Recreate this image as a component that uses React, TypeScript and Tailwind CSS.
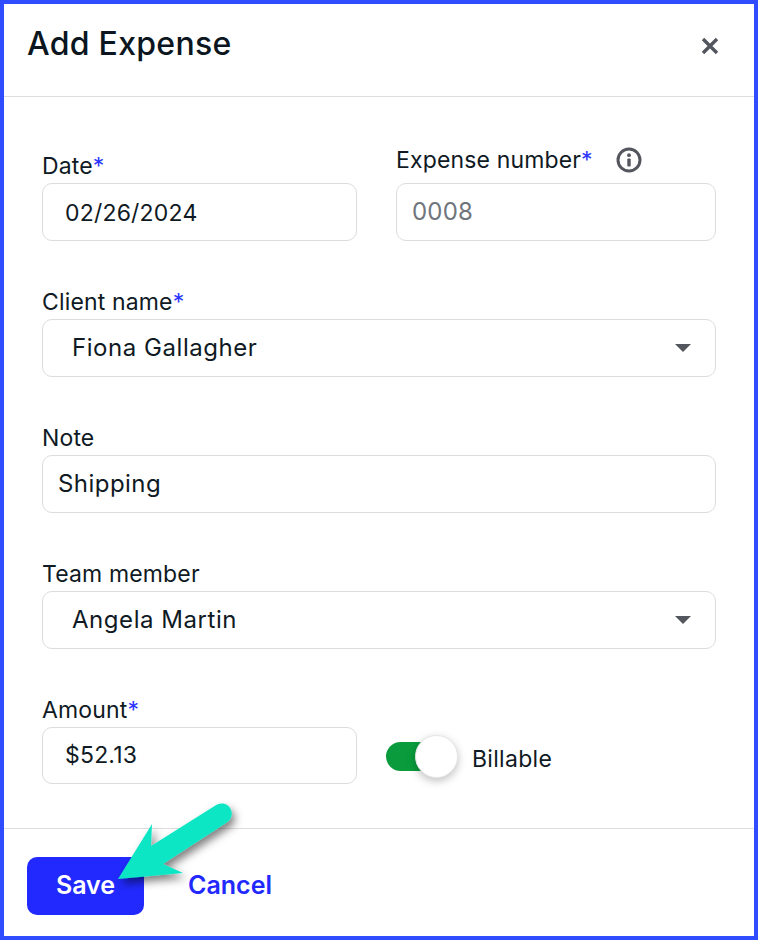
const font = { fontFamily: "Inter, sans-serif" };

function Label({ text, required }: { text: string; required?: boolean }) {
  return (
    <label className="block text-[23px] leading-[28px] tracking-[0.15px] text-[#0f1a24]">
      {text}
      {required && <span className="text-[#2b35ff]">*</span>}
    </label>
  );
}

function Select({ value }: { value: string }) {
  return (
    <div className="flex h-[58px] items-center justify-between rounded-[10px] border border-[#dcdcdc] pl-[29px] pr-[24px] text-[24px] tracking-[0.55px] text-[#0f1a24]">
      <span>{value}</span>
      <span className="h-0 w-0 border-x-[8px] border-t-[8px] border-x-transparent border-t-[#54565e]" />
    </div>
  );
}

export default function App() {
  return (
    <div
      className="relative flex h-[940px] w-[758px] flex-col overflow-hidden border-[4px] border-[#2f4dff] bg-white"
      style={font}
    >
      <header className="flex h-[93px] shrink-0 items-center justify-between border-b border-[#dedede] pb-[8px] pl-[23px] pr-[35px]">
        <h1 className="-mt-[4px] text-[32px] font-medium leading-none tracking-[0.27px] text-[#0b1620]">Add Expense</h1>
        <svg width="18" height="18" viewBox="0 0 18 18" className="text-[#54565e]">
          <path d="M2 2 L16 16 M16 2 L2 16" stroke="currentColor" strokeWidth="3.4" />
        </svg>
      </header>

      <div className="flex flex-1 flex-col px-[38px] pt-[55px]">
        <div className="flex gap-[39px]">
          <div className="w-[315px]">
            <Label text="Date" required />
            <div className="mt-[3px] flex h-[58px] items-center rounded-[10px] border border-[#dcdcdc] pl-[22px] pt-[2px] text-[23px] tracking-[0.2px] text-[#0f1a24]">
              02/26/2024
            </div>
          </div>
          <div className="-mt-[6px] w-[320px]">
            <div className="flex items-center gap-[23px]">
              <Label text="Expense number" required />
              <svg width="26" height="26" viewBox="0 0 26 26" className="text-[#54565e]">
                <circle cx="13" cy="13" r="11" fill="none" stroke="currentColor" strokeWidth="3" />
                <circle cx="13" cy="8.2" r="1.9" fill="currentColor" />
                <rect x="11.3" y="11.5" width="3.4" height="8" rx="1" fill="currentColor" />
              </svg>
            </div>
            <div className="mt-[9px] flex h-[58px] items-center rounded-[10px] border border-[#dcdcdc] pl-[15px] text-[24px] tracking-[0.2px] text-[#70757c]">
              0008
            </div>
          </div>
        </div>

        <div className="mt-[47px]">
          <Label text="Client name" required />
          <div className="mt-[3px]">
            <Select value="Fiona Gallagher" />
          </div>
        </div>

        <div className="mt-[47px]">
          <Label text="Note" />
          <div className="mt-[3px] flex h-[58px] items-center rounded-[10px] border border-[#dcdcdc] pl-[15px] text-[24px] tracking-[0.45px] text-[#0f1a24]">
            Shipping
          </div>
        </div>

        <div className="mt-[47px]">
          <Label text="Team member" />
          <div className="mt-[3px]">
            <Select value="Angela Martin" />
          </div>
        </div>

        <div className="mt-[47px] flex items-end gap-[29px]">
          <div className="w-[315px]">
            <Label text="Amount" required />
            <div className="mt-[3px] flex h-[57px] items-center rounded-[10px] border border-[#dcdcdc] pl-[22px] text-[23px] tracking-[0.2px] text-[#0f1a24]">
              $52.13
            </div>
          </div>
          <div className="mb-[3px] flex h-[50px] items-center">
            <div className="relative h-[29px] w-[60px] rounded-full bg-[#0a9c3c]">
              <span className="absolute -right-[12px] -top-[7px] h-[43px] w-[43px] rounded-full border border-[#e6e6e6] bg-white shadow-[0_3px_8px_rgba(0,0,0,0.25)]" />
            </div>
            <span className="ml-[26px] mt-[6px] text-[23px] tracking-[0.3px] text-[#0f1a24]">Billable</span>
          </div>
        </div>
      </div>

      <footer className="flex h-[108px] shrink-0 items-start gap-[44px] border-t border-[#dedede] pl-[23px] pt-[28px]">
        <button className="flex h-[58px] w-[117px] items-center justify-center rounded-[10px] bg-[#2129ff] text-[25px] font-semibold text-white">
          Save
        </button>
        <button className="flex h-[58px] items-center text-[25px] font-semibold text-[#2129ff]">Cancel</button>
      </footer>

      <svg
        className="absolute left-[96px] top-[786px]"
        width="150"
        height="110"
        viewBox="100 790 150 110"
      >
        <defs>
          <filter id="arrowShadow" x="-30%" y="-30%" width="160%" height="160%">
            <feDropShadow dx="3" dy="5" stdDeviation="4" floodColor="#000" floodOpacity="0.5" />
          </filter>
        </defs>
        <path
          d="M118 879 L152 824 L151 846 L217 804.5 C223 802 229 804 231 810 C233 815 231 820 226 823 L163 864 L183 873 Z"
          fill="#0de6c4"
          filter="url(#arrowShadow)"
        />
      </svg>
    </div>
  );
}
